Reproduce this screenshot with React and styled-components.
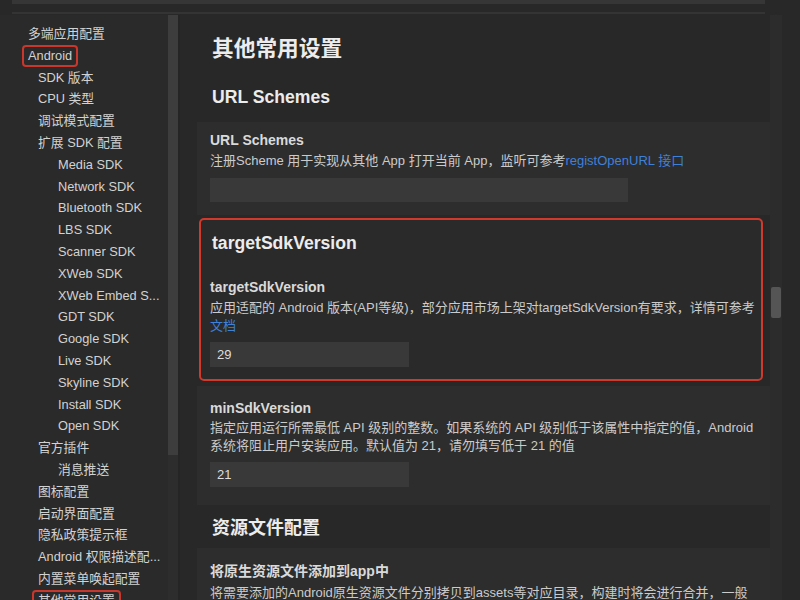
import React from "react";
import styled, { createGlobalStyle } from "styled-components";

const Global = createGlobalStyle`
  html, body { margin: 0; padding: 0; background: #282828; }
  body { font-family: "Liberation Sans", "Noto Sans CJK SC", sans-serif; color: #d6d6d6; }
  * { box-sizing: border-box; }
`;

const Page = styled.div`
  width: 800px;
  height: 600px;
  overflow: hidden;
  display: flex;
  flex-direction: column;
  background: #282828;
`;

const TopStrip = styled.div`
  height: 15px;
  padding: 0 35px 0 12px;
  display: flex;
  flex-direction: column;
  justify-content: space-between;
`;

const TopBar = styled.div`
  height: 4px;
  background: #363636;
`;

const TopLine = styled.div`
  height: 2px;
  background: #343434;
  margin-bottom: 1px;
`;

const Body = styled.div`
  flex: 1;
  display: flex;
  min-height: 0;
`;

const Sidebar = styled.nav`
  width: 168px;
  padding: 8px 0 0 0;
  display: flex;
  flex-direction: column;
  background: #2a2a2a;
`;

const NavItem = styled.div`
  height: 21.8px;
  line-height: 21.8px;
  font-size: 12.8px;
  color: #d2d2d2;
  white-space: nowrap;
  overflow: hidden;
  text-overflow: ellipsis;
  padding-left: ${(p) => [28, 38, 58][p.$level]}px;
  flex-shrink: 0;
`;

const Boxed = styled.span`
  display: inline-block;
  height: 22px;
  line-height: 18px;
  padding: 0 4px;
  margin-left: -6px;
  border: 2px solid #c9362b;
  border-radius: 4px;
`;

const SideTrack = styled.div`
  width: 10px;
  background: #2d2d2d;
  display: flex;
  flex-direction: column;
`;

const SideThumb = styled.div`
  height: 440px;
  background: #3d3d3d;
`;

const Divider = styled.div`
  width: 2px;
  background: #252525;
`;

const Main = styled.main`
  flex: 1;
  display: flex;
  flex-direction: column;
  padding: 20px 0 0 17px;
  min-width: 0;
`;

const H1 = styled.h1`
  margin: 0 0 0 15px;
  font-size: 21.7px;
  line-height: 28px;
  font-weight: bold;
  color: #ececec;
`;

const H2 = styled.h2`
  margin: ${(p) => p.$mt}px 0 0 15px;
  font-size: 18px;
  line-height: 26px;
  font-weight: bold;
  color: #ececec;
`;

const H3 = styled.h3`
  margin: ${(p) => p.$mt || 0}px 0 0 ${(p) => p.$ml ?? 15}px;
  font-size: 17.6px;
  line-height: ${(p) => p.$lh || 24}px;
  font-weight: bold;
  color: #ececec;
`;

const Card = styled.section`
  background: #2d2d2d;
  margin-top: ${(p) => p.$mt}px;
  padding: ${(p) => p.$pt}px 13px ${(p) => p.$pb}px 13px;
  ${(p) =>
    p.$highlight &&
    `
    border: 2px solid #d0392c;
    border-radius: 5px;
    margin-left: 2px;
    margin-right: 7px;
    padding-left: 9px;
    background: #2a2a2a;
  `}
`;

const Label = styled.div`
  margin-top: ${(p) => p.$mt || 0}px;
  font-size: 14px;
  line-height: 18px;
  font-weight: bold;
  color: #dadada;
`;

const Desc = styled.div`
  margin-top: ${(p) => p.$mt ?? 3}px;
  font-size: 13px;
  line-height: 18px;
  color: #cbcbcb;
  white-space: nowrap;
`;

const Link = styled.a`
  color: #3f80d8;
  text-decoration: none;
`;

const Input = styled.div`
  margin-top: ${(p) => p.$mt}px;
  width: ${(p) => p.$w}px;
  height: ${(p) => p.$h || 25}px;
  background: #393939;
  font-size: 13px;
  line-height: ${(p) => p.$h || 25}px;
  padding-left: 7px;
  color: #dedede;
`;

const MainTrack = styled.div`
  width: 12px;
  margin-right: 18px;
  background: #2c2c2c;
  padding-top: 272px;
  padding-left: 1px;
  padding-right: 1px;
`;

const MainThumb = styled.div`
  height: 31px;
  background: #555;
  border-radius: 2px;
`;

const nav = [
  [0, "多端应用配置"],
  [0, "Android", true],
  [1, "SDK 版本"],
  [1, "CPU 类型"],
  [1, "调试模式配置"],
  [1, "扩展 SDK 配置"],
  [2, "Media SDK"],
  [2, "Network SDK"],
  [2, "Bluetooth SDK"],
  [2, "LBS SDK"],
  [2, "Scanner SDK"],
  [2, "XWeb SDK"],
  [2, "XWeb Embed S..."],
  [2, "GDT SDK"],
  [2, "Google SDK"],
  [2, "Live SDK"],
  [2, "Skyline SDK"],
  [2, "Install SDK"],
  [2, "Open SDK"],
  [1, "官方插件"],
  [2, "消息推送"],
  [1, "图标配置"],
  [1, "启动界面配置"],
  [1, "隐私政策提示框"],
  [1, "Android 权限描述配..."],
  [1, "内置菜单唤起配置"],
  [1, "其他常用设置", true],
];

export default function App() {
  return (
    <Page>
      <Global />
      <TopStrip>
        <TopBar />
        <TopLine />
      </TopStrip>
      <Body>
        <Sidebar>
          {nav.map(([lvl, text, boxed], i) => (
            <NavItem key={i} $level={lvl}>
              {boxed ? <Boxed>{text}</Boxed> : text}
            </NavItem>
          ))}
        </Sidebar>
        <SideTrack>
          <SideThumb />
        </SideTrack>
        <Divider />
        <Main>
          <H1>其他常用设置</H1>
          <H3 $mt={22}>URL Schemes</H3>
          <Card $mt={13} $pt={9} $pb={13}>
            <Label>URL Schemes</Label>
            <Desc>
              注册Scheme 用于实现从其他 App 打开当前 App，监听可参考
              <Link>registOpenURL 接口</Link>
            </Desc>
            <Input $mt={8} $w={418} $h={24} />
          </Card>
          <Card $highlight $mt={3} $pt={12} $pb={12}>
            <H3 $ml={2} $lh={22}>targetSdkVersion</H3>
            <Label $mt={24}>targetSdkVersion</Label>
            <Desc>
              应用适配的 Android 版本(API等级)，部分应用市场上架对targetSdkVersion有要求，详情可参考
              <br />
              <Link>文档</Link>
            </Desc>
            <Input $mt={7} $w={199}>29</Input>
          </Card>
          <Card $mt={5} $pt={13} $pb={18}>
            <Label>minSdkVersion</Label>
            <Desc $mt={2}>
              指定应用运行所需最低 API 级别的整数。如果系统的 API 级别低于该属性中指定的值，Android
              <br />
              系统将阻止用户安装应用。默认值为 21，请勿填写低于 21 的值
            </Desc>
            <Input $mt={7} $w={199}>21</Input>
          </Card>
          <H2 $mt={10}>资源文件配置</H2>
          <Card $mt={7} $pt={14} $pb={20}>
            <Label>将原生资源文件添加到app中</Label>
            <Desc $mt={4}>
              将需要添加的Android原生资源文件分别拷贝到assets等对应目录，构建时将会进行合并，一般
            </Desc>
          </Card>
        </Main>
        <MainTrack>
          <MainThumb />
        </MainTrack>
      </Body>
    </Page>
  );
}
